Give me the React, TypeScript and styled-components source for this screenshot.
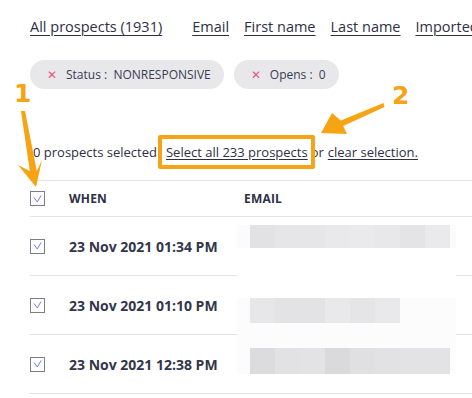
import React from 'react'
import styled, { createGlobalStyle } from 'styled-components'

const Global = createGlobalStyle`
  body {
    margin: 0;
    background: #ffffff;
    font-family: "Open Sans", "Liberation Sans", sans-serif;
    color: #2e3045;
  }
`

const ORANGE = '#f6a413'

const Page = styled.div`
  position: relative;
  width: 472px;
  height: 398px;
  overflow: hidden;
  padding-left: 30px;
  box-sizing: border-box;
`

const Tabs = styled.nav`
  display: flex;
  align-items: center;
  gap: 15px;
  padding-top: 15px;
  height: 22px;
  white-space: nowrap;
`

const Tab = styled.a`
  font-size: 14.5px;
  color: #2e3045;
  text-decoration: underline;
  text-underline-offset: 3px;
  text-decoration-thickness: 1px;
`

const Sep = styled.span`
  width: 1px;
  height: 14px;
  background: #9a9aa6;
`

const Chips = styled.div`
  display: flex;
  gap: 10px;
  margin-top: 23px;
`

const Chip = styled.div`
  display: flex;
  align-items: center;
  height: 29px;
  padding: 0 13px 0 17px;
  border-radius: 15px;
  background: #e8e8eb;
  font-size: 12px;
  color: #3a3c52;
  white-space: nowrap;
`

const Close = styled.span`
  color: #e8567c;
  font-size: 12px;
  margin-right: 9px;
`

const SelectLine = styled.div`
  margin-top: 46px;
  padding-left: 3px;
  height: 34px;
  display: flex;
  align-items: center;
  font-size: 13px;
  color: #2e3045;
  white-space: nowrap;
`

const Link = styled.a`
  text-decoration: underline;
  text-underline-offset: 2px;
`

const Boxed = styled.span`
  position: relative;
  z-index: 1;
  display: flex;
  align-items: center;
  border: 4px solid ${ORANGE};
  border-radius: 2px;
  height: 26px;
  padding: 0 3px 0 4px;
  margin: 0 -4px 0 1px;
`

const Gap = styled.span`
  width: 4px;
`

const Table = styled.div`
  margin-top: 11px;
  border-top: 1.5px solid #e2e2e4;
`

const Row = styled.div<{ $h: number }>`
  display: grid;
  grid-template-columns: 39px 175px 1fr;
  align-items: center;
  box-sizing: border-box;
  height: ${(p) => p.$h}px;
  border-bottom: 1.5px solid #e2e2e4;
`

const HeadCell = styled.div`
  font-size: 12px;
  font-weight: 700;
  color: #2e3045;
  letter-spacing: 0.2px;
`

const DateCell = styled.div`
  font-size: 14px;
  font-weight: 700;
  color: #33364a;
  white-space: nowrap;
`

const Box = styled.span`
  display: flex;
  align-items: center;
  justify-content: center;
  width: 13px;
  height: 13px;
  border: 1.5px solid #7c7c8a;
`

const Redact = styled.div`
  position: absolute;
  left: 237px;
  top: 219px;
  width: 219px;
  height: 158px;
  background: #ffffff;
  display: flex;
  flex-direction: column;
`

const Strip = styled.div<{ $h: number; $top: number; $bg: string }>`
  display: flex;
  height: ${(p) => p.$h}px;
  margin-top: ${(p) => p.$top}px;
  padding-left: 13px;
  background: ${(p) => p.$bg};
`

const Pix = styled.div<{ $c: string }>`
  width: 25px;
  height: 100%;
  background: ${(p) => p.$c};
`

const Num = styled.span<{ $x: number; $y: number }>`
  position: absolute;
  left: ${(p) => p.$x}px;
  top: ${(p) => p.$y}px;
  font-family: "DejaVu Sans", sans-serif;
  font-weight: 700;
  font-size: 25px;
  color: ${ORANGE};
  line-height: 1;
`

const Overlay = styled.svg`
  position: absolute;
  left: 0;
  top: 0;
  pointer-events: none;
`

const Check = () => (
  <Box>
    <svg width="9" height="8" viewBox="0 0 9 8">
      <path d="M1 2.5 L4.3 7 L8 0.5" fill="none" stroke="#6d78ff" strokeWidth="1" />
    </svg>
  </Box>
)

const rows = ['23 Nov 2021 01:34 PM', '23 Nov 2021 01:10 PM', '23 Nov 2021 12:38 PM']

const px1 = ['#e2e2e4', '#e6e6e8', '#e6e6e8', '#e9e9eb', '#eaeaec', '#e8e8ea', '#e4e4e6', '#eaeaec']
const px2 = ['#e7e7e9', '#e3e3e5', '#e3e3e5', '#e9e9eb', '#e5e5e7', '#e9e9eb']
const px3 = ['#dcdcde', '#e2e2e4', '#e3e3e5', '#dadadc', '#e0e0e2', '#e2e2e4', '#e3e3e5', '#e3e3e5']

export default function App() {
  return (
    <Page>
      <Global />
      <Tabs>
        <Tab>All prospects (1931)</Tab>
        <Sep />
        <Tab>Email</Tab>
        <Tab>First name</Tab>
        <Tab>Last name</Tab>
        <Tab>Imported</Tab>
      </Tabs>
      <Chips>
        <Chip>
          <Close>✕</Close>Status :&nbsp; NONRESPONSIVE
        </Chip>
        <Chip>
          <Close>✕</Close>Opens :&nbsp; 0
        </Chip>
      </Chips>
      <SelectLine>
        0 prospects selected
        <Boxed>
          <Link>Select all 233 prospects</Link>
        </Boxed>
        or
        <Gap />
        <Link>clear selection.</Link>
      </SelectLine>
      <Table>
        <Row $h={36}>
          <Check />
          <HeadCell>WHEN</HeadCell>
          <HeadCell>EMAIL</HeadCell>
        </Row>
        {rows.map((r) => (
          <Row $h={59} key={r}>
            <Check />
            <DateCell>{r}</DateCell>
            <div />
          </Row>
        ))}
      </Table>

      <Redact>
        <Strip $h={23} $top={6} $bg="#fbfbfb">
          {px1.map((c, i) => (
            <Pix $c={c} key={i} />
          ))}
        </Strip>
        <Strip $h={25} $top={50} $bg="#fcfcfc">
          {px2.map((c, i) => (
            <Pix $c={c} key={i} />
          ))}
        </Strip>
        <Strip $h={25} $top={0} $bg="#fcfcfc" />
        <Strip $h={26} $top={0} $bg="#fcfcfc">
          {px3.map((c, i) => (
            <Pix $c={c} key={i} />
          ))}
        </Strip>
      </Redact>

      <Num $x={14} $y={81}>1</Num>
      <Num $x={392} $y={83}>2</Num>
      <Overlay width="472" height="398" viewBox="0 0 472 398">
        <polygon
          points="21,111 25,111 36.8,171 42,160 36,187 18,165 29.8,171"
          fill={ORANGE}
        />
        <polygon
          points="383.5,103 340.8,120.5 332,113 321,133 347,134 343.2,126.1 384.5,107"
          fill={ORANGE}
        />
      </Overlay>
    </Page>
  )
}
